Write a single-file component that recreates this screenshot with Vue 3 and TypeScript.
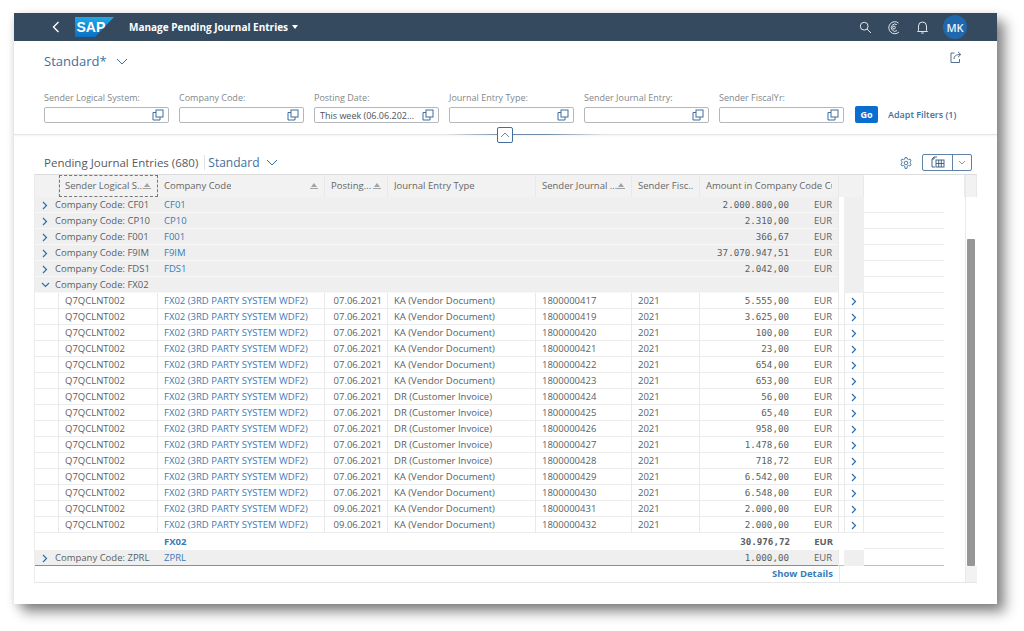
<template>
  <div class="page">
    <div class="card">
      <!-- barra superior -->
      <header class="shell">
        <svg class="back" width="8" height="12" viewBox="0 0 8 12"><path d="M6.5 1 1.5 6l5 5" /></svg>
        <svg class="logo" width="39" height="20" viewBox="0 0 39 20">
          <defs>
            <linearGradient id="sapBlue" x1="0" y1="0" x2="0" y2="1">
              <stop offset="0" stop-color="#1fa9e8" />
              <stop offset="1" stop-color="#0a6fc2" />
            </linearGradient>
          </defs>
          <polygon points="0,0 39,0 20,20 0,20" fill="url(#sapBlue)" />
          <text x="1.5" y="14.5" class="logo-text">SAP</text>
        </svg>
        <span class="app-title">Manage Pending Journal Entries</span>
        <span class="title-caret"></span>
        <div class="shell-icons">
          <svg width="13" height="13" viewBox="0 0 13 13" class="sh-icon"><circle cx="5.2" cy="5.2" r="3.9" /><path d="m8 8 4 4" /></svg>
          <svg width="14" height="15" viewBox="0 0 14 15" class="sh-icon"><path d="M11.5 3A6 6 0 1 0 12 12" /><path d="M9.8 4.6A3.6 3.6 0 1 0 10 10.6" /><circle cx="7" cy="7.5" r="1.4" /></svg>
          <svg width="13" height="14" viewBox="0 0 13 14" class="sh-icon"><path d="M2.5 10.5V6a4 4 0 0 1 8 0v4.500l1 1H1.500z" /><path d="M5.200 13h2.600" /></svg>
          <span class="avatar">MK</span>
        </div>
      </header>

      <!-- cabecera de filtros -->
      <section class="filterbar">
        <div class="variant-row">
          <div class="variant">
            <span>Standard*</span>
            <svg width="12" height="7" viewBox="0 0 12 7" class="chev"><path d="m1 1 5 5 5-5" /></svg>
          </div>
          <svg width="12" height="12" viewBox="0 0 12 12" class="share"><path d="M4.500 2H1v9.500h8.500V8" /><path d="M4 8c0-3 2-4.500 6.500-4.500M8 .8l2.800 2.700L8 6.200" /></svg>
        </div>
        <div class="filters">
          <div v-for="f in filters" :key="f.label" class="filter">
            <label>{{ f.label }}</label>
            <div class="input">
              <span class="input-value">{{ f.value }}</span>
              <svg width="12" height="12" viewBox="0 0 12 12" class="vh"><path d="M4 3.500H1v7.500h7V8" /><rect x="4" y="1" width="7" height="7" /></svg>
            </div>
          </div>
          <button class="go">Go</button>
          <a class="adapt">Adapt Filters (1)</a>
        </div>
        <div class="collapse-line"></div>
        <button class="collapse">
          <svg width="10" height="6" viewBox="0 0 10 6"><path d="m1 5 4-4 4 4" /></svg>
        </button>
      </section>

      <!-- barra de la tabla -->
      <div class="toolbar">
        <h2>Pending Journal Entries (680)</h2>
        <span class="tb-sep"></span>
        <span class="tb-variant">Standard</span>
        <svg width="12" height="7" viewBox="0 0 12 7" class="chev"><path d="m1 1 5 5 5-5" /></svg>
        <div class="tb-right">
          <svg width="12" height="12" viewBox="0 0 12 12" class="gear">
            <circle cx="6" cy="6" r="1.800" />
            <path d="M5 .6h2l.3 1.500 1.300.6L10 2l1.100 1.700-1.100 1 .1 1.400 1.100 1L10 9l-1.400-.6-1.300.7L7 11.400H5l-.3-2.300-1.300-.7L2 9 .9 7.100l1.100-1 .1-1.400-1.100-1L2 2l1.400.7 1.300-.6z" />
          </svg>
          <div class="btn-group">
            <span class="bg-main">
              <svg width="14" height="13" viewBox="0 0 14 13">
                <path d="M6 1H3L1 3v8h3" />
                <path d="M3 1v2H1" />
                <rect x="5" y="4" width="8" height="7" />
                <path d="M5 7.500h8M7.700 4v7M10.300 4v7" />
              </svg>
            </span>
            <span class="bg-drop">
              <svg width="8" height="5" viewBox="0 0 8 5"><path d="m1 1 3 3 3-3" /></svg>
            </span>
          </div>
        </div>
      </div>

      <!-- tabla -->
      <div class="table">
        <div class="row head">
          <div class="c"></div>
          <div class="c focus"><span class="th">Sender Logical S...</span><i class="sort"></i></div>
          <div class="c"><span class="th">Company Code</span><i class="sort"></i></div>
          <div class="c"><span class="th">Posting...</span><i class="sort"></i></div>
          <div class="c"><span class="th">Journal Entry Type</span></div>
          <div class="c"><span class="th">Sender Journal ...</span><i class="sort"></i></div>
          <div class="c"><span class="th">Sender Fisc...</span></div>
          <div class="c"><span class="th">Amount in Company Code Cu...</span></div>
          <div class="c gap-cell"></div>
          <div class="c act"></div>
          <div class="c filler"></div>
          <div class="c sb"></div>
        </div>

        <template v-for="g in groupsTop" :key="g.code">
          <div class="row group">
            <div class="c g-title">
              <svg width="6" height="9" viewBox="0 0 6 9" class="arrow"><path d="m1 1 3.500 3.500L1 8" /></svg>
              <span>Company Code: {{ g.code }}</span>
            </div>
            <div class="c"><a class="link">{{ g.code }}</a></div>
            <div class="c span-4"></div>
            <div class="c amount-cell"><span class="num">{{ g.amount }}</span><span class="cur">EUR</span></div>
            <div class="gap-cell white"></div>
            <div class="c act"></div>
            <div class="c filler"><span class="fl"></span></div>
            <div class="c sb"></div>
          </div>
        </template>

        <div class="row group">
          <div class="c g-title">
            <svg width="9" height="6" viewBox="0 0 9 6" class="arrow open"><path d="m1 1 3.500 3.500L8 1" /></svg>
            <span>Company Code: FX02</span>
          </div>
          <div class="c"></div>
          <div class="c span-4"></div>
          <div class="c amount-cell"></div>
          <div class="gap-cell white"></div>
          <div class="c act"></div>
          <div class="c filler"><span class="fl"></span></div>
          <div class="c sb"></div>
        </div>

        <div v-for="r in rows" :key="r.doc" class="row item">
          <div class="c"></div>
          <div class="c txt">Q7QCLNT002</div>
          <div class="c"><a class="link">FX02 (3RD PARTY SYSTEM WDF2)</a></div>
          <div class="c date">{{ r.date }}</div>
          <div class="c txt">{{ r.type === 'KA' ? 'KA (Vendor Document)' : 'DR (Customer Invoice)' }}</div>
          <div class="c txt">{{ r.doc }}</div>
          <div class="c txt">2021</div>
          <div class="c amount-cell"><span class="num">{{ r.amount }}</span><span class="cur">EUR</span></div>
          <div class="gap-cell"></div>
          <div class="c act nav">
            <svg width="6" height="9" viewBox="0 0 6 9" class="arrow"><path d="m1 1 3.500 3.500L1 8" /></svg>
          </div>
          <div class="c filler"><span class="fl"></span></div>
          <div class="c sb"></div>
        </div>

        <div class="row total">
          <div class="c"></div>
          <div class="c"></div>
          <div class="c"><a class="link strong">FX02</a></div>
          <div class="c span-4"></div>
          <div class="c amount-cell"><span class="num">30.976,72</span><span class="cur">EUR</span></div>
          <div class="gap-cell"></div>
          <div class="c act"></div>
          <div class="c filler"><span class="fl"></span></div>
          <div class="c sb"></div>
        </div>

        <div class="row group last">
          <div class="c g-title">
            <svg width="6" height="9" viewBox="0 0 6 9" class="arrow"><path d="m1 1 3.500 3.500L1 8" /></svg>
            <span>Company Code: ZPRL</span>
          </div>
          <div class="c"><a class="link">ZPRL</a></div>
          <div class="c span-4"></div>
          <div class="c amount-cell"><span class="num">1.000,00</span><span class="cur">EUR</span></div>
          <div class="gap-cell white"></div>
          <div class="c act"></div>
          <div class="c filler"><span class="fl dark"></span></div>
          <div class="c sb"></div>
        </div>

        <div class="row foot">
          <div class="foot-cell"><a class="details">Show Details</a></div>
          <div class="foot-rest"></div>
          <div class="c sb"></div>
        </div>

        <div class="thumb"></div>
      </div>
    </div>
  </div>
</template>

<script setup lang="ts">
interface Fila {
  date: string
  type: 'KA' | 'DR'
  doc: string
  amount: string
}

const filters = [
  { label: 'Sender Logical System:', value: '' },
  { label: 'Company Code:', value: '' },
  { label: 'Posting Date:', value: 'This week (06.06.202...' },
  { label: 'Journal Entry Type:', value: '' },
  { label: 'Sender Journal Entry:', value: '' },
  { label: 'Sender FiscalYr:', value: '' },
]

const groupsTop = [
  { code: 'CF01', amount: '2.000.800,00' },
  { code: 'CP10', amount: '2.310,00' },
  { code: 'F001', amount: '366,67' },
  { code: 'F9IM', amount: '37.070.947,51' },
  { code: 'FDS1', amount: '2.042,00' },
]

const rows: Fila[] = [
  { date: '07.06.2021', type: 'KA', doc: '1800000417', amount: '5.555,00' },
  { date: '07.06.2021', type: 'KA', doc: '1800000419', amount: '3.625,00' },
  { date: '07.06.2021', type: 'KA', doc: '1800000420', amount: '100,00' },
  { date: '07.06.2021', type: 'KA', doc: '1800000421', amount: '23,00' },
  { date: '07.06.2021', type: 'KA', doc: '1800000422', amount: '654,00' },
  { date: '07.06.2021', type: 'KA', doc: '1800000423', amount: '653,00' },
  { date: '07.06.2021', type: 'DR', doc: '1800000424', amount: '56,00' },
  { date: '07.06.2021', type: 'DR', doc: '1800000425', amount: '65,40' },
  { date: '07.06.2021', type: 'DR', doc: '1800000426', amount: '958,00' },
  { date: '07.06.2021', type: 'DR', doc: '1800000427', amount: '1.478,60' },
  { date: '07.06.2021', type: 'DR', doc: '1800000428', amount: '718,72' },
  { date: '07.06.2021', type: 'KA', doc: '1800000429', amount: '6.542,00' },
  { date: '07.06.2021', type: 'KA', doc: '1800000430', amount: '6.548,00' },
  { date: '09.06.2021', type: 'KA', doc: '1800000431', amount: '2.000,00' },
  { date: '09.06.2021', type: 'KA', doc: '1800000432', amount: '2.000,00' },
]
</script>

<style>
html,
body {
  margin: 0;
  background: #fff;
}
</style>

<style scoped>
.page {
  width: 1024px;
  height: 631px;
  padding: 13px 27px 27px 14px;
  box-sizing: border-box;
  overflow: hidden;
  font-family: "Open Sans", "Noto Sans", sans-serif;
  font-size: 9.5px;
  color: #5a5f64;
}
.card {
  height: 591px;
  background: #fff;
  box-shadow: 8px 8px 12px rgba(0, 0, 0, 0.45), 0 2px 8px rgba(0, 0, 0, 0.12);
}

/* barra superior */
.shell {
  height: 28px;
  background: #354a5f;
  display: flex;
  align-items: center;
  padding: 0 30px 0 38px;
}
.back {
  fill: none;
  stroke: #fff;
  stroke-width: 1.4;
}
.logo {
  margin-left: 15px;
}
.logo-text {
  font-family: "Liberation Sans", sans-serif;
  font-weight: 700;
  font-size: 14px;
  fill: #fff;
}
.app-title {
  margin-left: 15px;
  font-weight: 700;
  font-size: 10px;
  color: #fff;
}
.title-caret {
  margin-left: 4px;
  border-left: 3.5px solid transparent;
  border-right: 3.5px solid transparent;
  border-top: 4px solid #fff;
}
.shell-icons {
  margin-left: auto;
  display: flex;
  align-items: center;
  gap: 15px;
}
.sh-icon {
  fill: none;
  stroke: #dfe5ea;
  stroke-width: 1;
}
.avatar {
  width: 24px;
  height: 24px;
  margin-left: -1px;
  border-radius: 50%;
  background: #1f68ad;
  color: #eaf2f8;
  font-size: 11px;
  font-weight: 600;
  display: flex;
  align-items: center;
  justify-content: center;
}

/* filtros */
.filterbar {
  position: relative;
  height: 94px;
  box-sizing: border-box;
  padding: 10px 35px 0 30px;
}
.variant-row {
  height: 20px;
  display: flex;
  align-items: center;
  justify-content: space-between;
}
.variant {
  display: flex;
  align-items: center;
  gap: 9px;
  font-size: 13px;
  color: #3f6f9c;
}
.chev {
  fill: none;
  stroke: #3f6f9c;
  stroke-width: 1;
}
.share {
  fill: none;
  stroke: #52708c;
  stroke-width: 1;
  margin-top: -8px;
}
.filters {
  margin-top: 20px;
  display: flex;
  align-items: flex-end;
}
.filter {
  width: 125px;
  margin-right: 10px;
}
.filter label {
  display: block;
  height: 13px;
  margin-bottom: 3px;
  line-height: 13px;
  color: #82878c;
  font-size: 9px;
  white-space: nowrap;
}
.input {
  height: 16px;
  box-sizing: border-box;
  border: 1px solid #b4b8bc;
  border-radius: 2px;
  display: flex;
  align-items: center;
  justify-content: space-between;
  padding: 0 4px 0 5px;
}
.input-value {
  font-size: 9px;
  white-space: nowrap;
  color: #4e5358;
}
.vh {
  fill: #fff;
  stroke: #3f6f9c;
  stroke-width: 1;
  flex: none;
}
.go {
  width: 23px;
  height: 17px;
  margin: 0 0 0 1px;
  padding: 0;
  border: 0;
  border-radius: 2px;
  background: #0a6ed1;
  color: #fff;
  font: 700 9px "Open Sans", sans-serif;
}
.adapt {
  margin-left: 10px;
  line-height: 16px;
  color: #3f6f9c;
  font-size: 9px;
  font-weight: 600;
  white-space: nowrap;
}
.collapse-line {
  position: absolute;
  left: 0;
  right: 0;
  bottom: 0;
  height: 1px;
  background: linear-gradient(90deg, #e6e6e6 0, #e6e6e6 44%, #6d8aa6 50%, #6d8aa6 54%, #e6e6e6 60%, #e6e6e6 100%);
  box-shadow: 0 1px 2px rgba(0, 0, 0, 0.08);
}
.collapse {
  position: absolute;
  left: 483px;
  bottom: -8px;
  width: 16px;
  height: 16px;
  padding: 0;
  border: 1px solid #3f6f9c;
  border-radius: 2px;
  background: #fff;
  display: flex;
  align-items: center;
  justify-content: center;
}
.collapse svg {
  fill: none;
  stroke: #6d8aa6;
  stroke-width: 1;
}

/* barra de la tabla */
.toolbar {
  height: 39px;
  box-sizing: border-box;
  padding: 16px 25px 0 30px;
  display: flex;
  align-items: center;
  height: 39px;
}
.toolbar h2 {
  margin: 0;
  font-size: 11.5px;
  font-weight: 400;
  color: #565a5e;
  white-space: nowrap;
}
.tb-sep {
  width: 1px;
  height: 15px;
  margin: 0 3px 0 6px;
  background: #e2e2e2;
}
.tb-variant {
  margin-right: 7px;
  font-size: 12px;
  color: #3f6f9c;
}
.tb-right {
  margin-left: auto;
  display: flex;
  align-items: center;
  gap: 10px;
}
.gear {
  fill: none;
  stroke: #3f6f9c;
  stroke-width: 0.9;
}
.btn-group {
  height: 17px;
  width: 50px;
  box-sizing: border-box;
  border: 1px solid #5f83a5;
  border-radius: 2px;
  display: flex;
}
.bg-main {
  width: 29px;
  border-right: 1px solid #5f83a5;
  display: flex;
  align-items: center;
  justify-content: center;
}
.bg-main svg {
  fill: none;
  stroke: #35587a;
  stroke-width: 0.9;
}
.bg-drop {
  flex: 1;
  display: flex;
  align-items: center;
  justify-content: center;
}
.bg-drop svg {
  fill: none;
  stroke: #8a97a3;
  stroke-width: 1;
}

/* tabla */
.table {
  position: relative;
  margin: 0 20px;
  border-top: 1px solid #dcdcdc;
  border-bottom: 1px solid #e6e6e6;
  border-left: 1px solid #ececec;
  height: 409px;
  box-sizing: border-box;
}
.row {
  display: grid;
  grid-template-columns: 24px 99px 167px 63px 148px 96px 68px 139px 5px 20px 101px 12px;
  height: 16px;
  line-height: 16px;
}
.c {
  min-width: 0;
  white-space: nowrap;
  overflow: hidden;
  box-sizing: border-box;
}
.head {
  height: 22px;
  background: #f2f2f2;
  line-height: 22px;
  color: #666;
}
.head .c {
  display: flex;
  align-items: center;
  justify-content: space-between;
  padding: 0 6px;
  border-right: 1px solid #e9e9e9;
  font-size: 9.5px;
}
.head .focus {
  outline: 1px dashed #777;
  outline-offset: -1px;
}
.head .gap-cell {
  background: #f2f2f2;
  border-right: 0;
  padding: 0;
}
.head .act,
.head .filler,
.head .sb {
  padding: 0;
}
.th {
  overflow: hidden;
}
.sort {
  flex: none;
  width: 8px;
  height: 6px;
  background: linear-gradient(#a3a3a3, #a3a3a3) bottom / 8px 1px no-repeat;
  position: relative;
}
.sort::before {
  content: "";
  position: absolute;
  left: 1px;
  top: 0;
  border-left: 3px solid transparent;
  border-right: 3px solid transparent;
  border-bottom: 4px solid #a3a3a3;
}
.span-4 {
  grid-column: span 4;
}
.group {
  background: #efefef;
  box-shadow: inset 0 -1px 0 #f8f8f8;
}
.group .g-title {
  grid-column: span 2;
  display: flex;
  align-items: center;
}
.arrow {
  fill: none;
  stroke: #2f6ea8;
  stroke-width: 1.2;
  flex: none;
}
.g-title .arrow {
  margin-left: 7px;
  margin-right: 7px;
}
.g-title .arrow.open {
  margin-left: 6px;
  margin-right: 5px;
}
.group .c:nth-child(2) {
  padding-left: 6px;
}
.link {
  color: #3a7ab8;
}
.strong {
  font-weight: 700;
}
.num {
  flex: 1;
  text-align: right;
  font-family: "DejaVu Sans Mono", "Liberation Mono", monospace;
  font-size: 9.2px;
}
.cur {
  width: 43px;
  text-align: right;
}
.amount-cell {
  display: flex;
  padding-right: 6px;
  border-right: 1px solid #e9e9e9;
}
.white {
  background: #fff;
}
.gap-cell {
  min-width: 0;
}
.filler {
  background: #fff;
  padding-right: 21px;
}
.fl {
  display: block;
  height: 15px;
  border-bottom: 1px solid #ececec;
}
.fl.dark {
  border-bottom-color: #bdbdbd;
}
.sb {
  background: #fff;
  border-left: 1px solid #e9e9e9;
}
.group .act {
  background: #efefef;
}
.item {
  background: #fff;
  box-shadow: inset 0 -1px 0 #ececec;
}
.item .c:not(.filler):not(.sb) {
  border-right: 1px solid #e9e9e9;
  padding-left: 6px;
}
.item .c:first-child {
  padding: 0;
}
.item .c:nth-child(2) {
  padding-left: 6px;
}
.item .date {
  padding-left: 9px;
  padding-right: 5px;
  text-align: right;
}
.item .amount-cell {
  padding: 0 6px 0 0;
}
.nav {
  padding-left: 6px;
  display: flex;
  align-items: center;
  border-left: 1px solid #e9e9e9;
}
.total {
  height: 17px;
  line-height: 17px;
  font-weight: 700;
}
.total .c:nth-child(3) {
  padding-left: 6px;
}
.total .num {
  font-weight: 700;
}
.total .amount-cell {
  border-right: 0;
}
.last {
  box-shadow: inset 0 -1px 0 #8d8d8d;
  grid-template-columns: 24px 99px 167px 63px 148px 96px 68px 139px 5px 20px 101px 12px;
}
.last .filler {
  background: #fff;
}
.last .gap-cell {
  box-shadow: inset 0 -1px 0 #bdbdbd;
}
.foot {
  grid-template-columns: 805px 125px 12px;
  height: 16px;
}
.foot-cell {
  text-align: right;
  padding-right: 6px;
  border-right: 1px solid #e9e9e9;
}
.details {
  color: #3a7ab8;
  font-weight: 700;
}
.foot .sb {
  background: #f2f2f2;
}
.head .sb {
  background: #f2f2f2;
}
.thumb {
  position: absolute;
  right: 2px;
  top: 64px;
  width: 8px;
  height: 327px;
  background: #969696;
  border-radius: 1px;
}
</style>
